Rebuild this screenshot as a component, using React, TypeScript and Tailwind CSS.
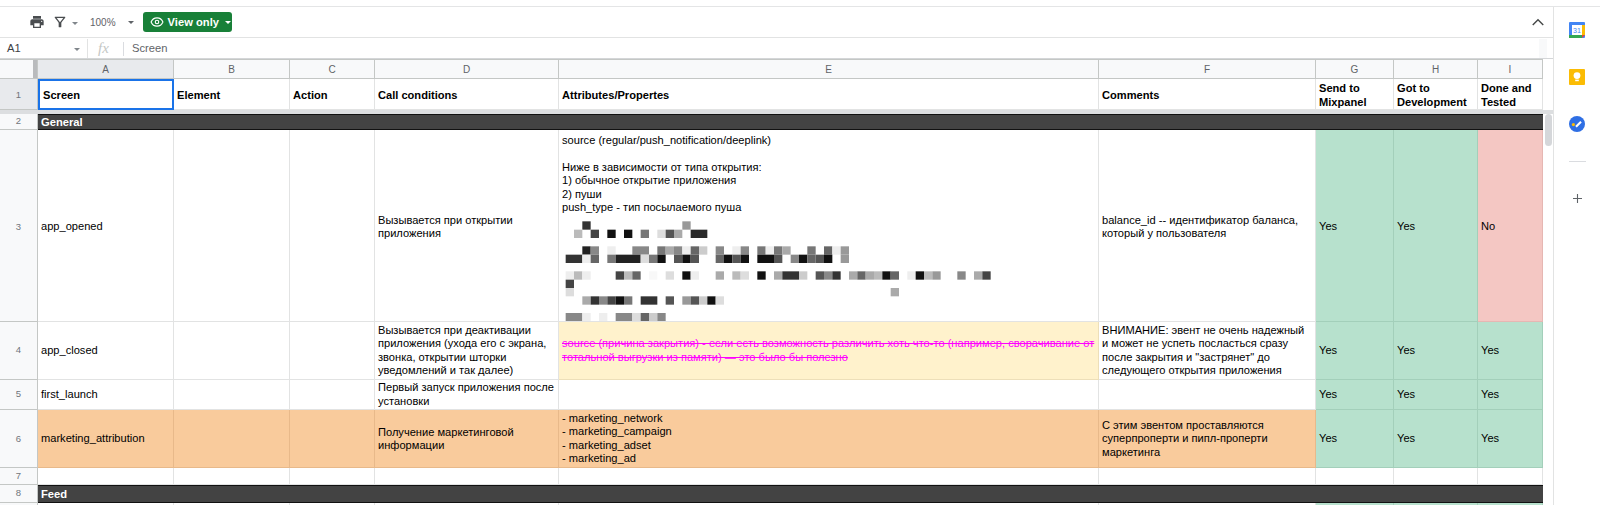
import { Eye } from 'lucide-react';

type Tone = 'plain' | 'orange' | 'yellow' | 'green' | 'red' | 'selected';

const toneClass: Record<Tone, string> = {
  plain: 'bg-white border-r border-b border-[#e2e3e3]',
  selected: 'bg-white border-2 border-[#1a73e8]',
  orange: 'bg-[#f9cb9c] border-r border-b border-[#e8b98a]',
  yellow: 'bg-[#fff2cc] border-r border-b border-[#eddfb9]',
  green: 'bg-[#b7e1cd] border-r border-b border-[#a3cfba]',
  red: 'bg-[#f4c7c3] border-r border-b border-[#e6b7b3]',
};

function Cell({ tone = 'plain', children, className = '' }: { tone?: Tone; children?: React.ReactNode; className?: string }) {
  return (
    <div className={`flex items-center overflow-hidden whitespace-pre px-[3px] leading-[13.4px] ${toneClass[tone]} ${className}`}>
      <div>{children}</div>
    </div>
  );
}

function RowNum({ n, active = false, className = '' }: { n?: number; active?: boolean; className?: string }) {
  return (
    <div className={`flex items-center justify-center border-r border-b border-[#c4c7c5] text-[9.5px] text-[#70757a] ${active ? 'bg-[#e8eaed]' : 'bg-[#f8f9fa]'} ${className}`}>
      {n}
    </div>
  );
}

function ColHead({ label, active = false }: { label: string; active?: boolean }) {
  return (
    <div className={`flex items-center justify-center border-t border-r border-b border-[#c4c7c5] text-[10px] text-[#5f6368] ${active ? 'bg-[#e8eaed]' : 'bg-[#f8f9fa]'}`}>
      {label}
    </div>
  );
}

function SectionRow({ n, title }: { n: number; title: string }) {
  return (
    <>
      <RowNum n={n} />
      <div className="col-span-9 flex items-center border-y border-[#111] bg-[#434343] pl-[3px] pt-[1px] text-[11.2px] font-bold leading-none text-white">{title}</div>
    </>
  );
}

function Caret({ className = '' }: { className?: string }) {
  return <span className={`inline-block h-0 w-0 border-x-[3px] border-t-[3px] border-x-transparent ${className}`} />;
}

// пикселизованный кусок ячейки: [строка, x, ширина, цвет] в координатах зума
const mosaic: [number, number, number, string][] = [
  [290, 100, 25, '#333'], [290, 400, 25, '#999'],
  [315, 75, 25, '#bbb'], [315, 125, 25, '#444'], [315, 175, 25, '#111'], [315, 225, 25, '#111'], [315, 275, 25, '#777'], [315, 325, 25, '#ddd'], [315, 350, 25, '#555'], [315, 375, 25, '#aaa'], [315, 425, 50, '#2a2a2a'],
  [365, 100, 25, '#222'], [365, 125, 25, '#888'], [365, 175, 25, '#eee'], [365, 250, 50, '#888'], [365, 325, 25, '#777'], [365, 350, 25, '#aaa'], [365, 375, 25, '#888'], [365, 400, 25, '#eee'], [365, 425, 25, '#666'], [365, 450, 25, '#ccc'], [365, 500, 25, '#888'], [365, 550, 25, '#eee'], [365, 575, 25, '#888'], [365, 625, 25, '#777'], [365, 650, 25, '#eee'], [365, 675, 25, '#777'], [365, 700, 25, '#aaa'], [365, 775, 25, '#777'], [365, 825, 25, '#666'], [365, 850, 25, '#eee'], [365, 875, 25, '#999'],
  [390, 50, 50, '#333'], [390, 100, 25, '#eee'], [390, 125, 25, '#666'], [390, 175, 25, '#777'], [390, 200, 75, '#222'], [390, 275, 25, '#ddd'], [390, 300, 25, '#777'], [390, 325, 25, '#111'], [390, 375, 25, '#555'], [390, 400, 25, '#111'], [390, 425, 25, '#555'], [390, 500, 25, '#666'], [390, 525, 25, '#111'], [390, 550, 25, '#555'], [390, 575, 25, '#111'], [390, 625, 50, '#111'], [390, 675, 25, '#555'], [390, 725, 25, '#888'], [390, 750, 25, '#111'], [390, 775, 25, '#666'], [390, 800, 25, '#555'], [390, 825, 25, '#111'], [390, 875, 25, '#999'],
  [440, 50, 25, '#eee'], [440, 75, 25, '#bbb'], [440, 100, 25, '#eee'], [440, 200, 25, '#444'], [440, 225, 25, '#bbb'], [440, 250, 25, '#666'], [440, 300, 25, '#f8f8f8'], [440, 350, 25, '#ddd'], [440, 400, 25, '#111'], [440, 425, 25, '#eee'], [440, 500, 25, '#aaa'], [440, 550, 25, '#bbb'], [440, 575, 25, '#ddd'], [440, 625, 25, '#111'], [440, 675, 25, '#aaa'], [440, 700, 50, '#333'], [440, 750, 25, '#ccc'], [440, 800, 25, '#555'], [440, 825, 25, '#888'], [440, 850, 25, '#333'], [440, 900, 25, '#aaa'], [440, 925, 25, '#666'], [440, 950, 25, '#aaa'], [440, 975, 25, '#bbb'], [440, 1000, 25, '#111'], [440, 1025, 25, '#666'], [440, 1075, 25, '#eee'], [440, 1100, 25, '#111'], [440, 1125, 25, '#bbb'], [440, 1150, 25, '#999'], [440, 1225, 25, '#888'], [440, 1275, 25, '#aaa'], [440, 1300, 25, '#444'],
  [465, 50, 25, '#444'], [490, 50, 25, '#ddd'], [490, 1025, 25, '#aaa'],
  [515, 100, 25, '#aaa'], [515, 125, 25, '#333'], [515, 150, 25, '#888'], [515, 175, 25, '#444'], [515, 200, 25, '#111'], [515, 225, 25, '#777'], [515, 275, 50, '#333'], [515, 350, 25, '#555'], [515, 400, 25, '#999'], [515, 425, 25, '#555'], [515, 450, 25, '#ccc'], [515, 475, 25, '#111'], [515, 500, 25, '#ddd'],
  [565, 50, 50, '#888'], [565, 100, 25, '#eee'], [565, 150, 25, '#eee'], [565, 200, 50, '#888'], [565, 250, 25, '#ddd'], [565, 275, 25, '#666'], [565, 300, 25, '#ccc'], [565, 325, 25, '#888'],
];

function Mosaic() {
  return (
    <svg width="460" height="105" viewBox="30 280 1380 315" className="mt-[4px] -ml-[3px] block">
      {mosaic.map(([y, x, w, c], i) => (
        <rect key={i} x={x} y={y} width={w} height={25} fill={c} />
      ))}
    </svg>
  );
}

export default function App() {
  return (
    <div className="flex h-[505px] w-[1600px] flex-col overflow-hidden bg-white font-['Liberation_Sans',Arial,sans-serif] text-[11.1px] text-black">
      <div className="h-[7px] shrink-0 border-b border-[#e4e5e6]" />
      <div className="flex min-h-0 flex-1">
        <div className="flex w-[1553px] flex-col">
          {/* панель инструментов */}
          <div className="flex h-[31px] shrink-0 items-center border-b border-[#e2e3e3] pl-[29px] text-[#444746]">
            <svg width="16" height="16" viewBox="0 0 24 24" fill="#4a4d50"><path d="M19 8H5c-1.66 0-3 1.34-3 3v6h4v4h12v-4h4v-6c0-1.66-1.34-3-3-3zm-3 11H8v-5h8v5zm3-7c-.55 0-1-.45-1-1s.45-1 1-1 1 .45 1 1-.45 1-1 1zm-1-9H6v4h12V3z" /></svg>
            <svg width="16" height="16" viewBox="0 0 24 24" fill="#4a4d50" className="ml-[7px]"><path d="M7 6h10l-5.01 6.3L7 6zm-2.75-.39C6.27 8.2 10 13 10 13v6c0 .55.45 1 1 1h2c.55 0 1-.45 1-1v-6s3.73-4.8 5.75-7.39C20.26 4.95 19.79 4 18.96 4H5.04c-.83 0-1.3.95-.79 1.61z" /></svg>
            <Caret className="ml-[4px] mt-[2px] border-t-[#80868b]" />
            <span className="ml-[12px] text-[10px] text-[#5f6368]">100%</span>
            <Caret className="ml-[12px] mt-[1px] border-x-[3.5px] border-t-[3.5px] border-t-[#5f6368]" />
            <div className="ml-[9px] flex h-[20px] w-[89px] items-center whitespace-nowrap rounded-[3px] bg-[#188038] pl-[7px] text-[11.2px] font-bold text-white">
              <Eye size={14} strokeWidth={2} />
              <span className="ml-[4px]">View only</span>
              <Caret className="ml-[6px] border-x-[3.5px] border-t-[3.5px] border-t-white" />
            </div>
            <svg width="14" height="14" viewBox="0 0 24 24" fill="none" stroke="#444746" strokeWidth="2.4" className="ml-auto mr-[8px]"><path d="M3 17l9-9 9 9" /></svg>
          </div>

          {/* строка формул */}
          <div className="flex h-[21px] shrink-0 items-center border-b border-[#d4d6d8] pt-[1px] text-[11.2px]">
            <span className="ml-[7px] w-[67px] text-[#3c4043]">A1</span>
            <Caret className="mt-[1px] border-t-[#80868b]" />
            <div className="ml-[7px] h-full w-px bg-[#e2e3e3]" />
            <span className="ml-[10px] w-[25px] font-['Liberation_Serif',serif] text-[15px] italic leading-none text-[#c4c7c5]">fx</span>
            <div className="h-[14px] w-px bg-[#dadce0]" />
            <span className="ml-[8px] text-[#5f6368]">Screen</span>
            <div className="ml-auto mr-[6px] h-full w-[8px] bg-[#f8f9fa]" />
          </div>

          <div className="flex min-h-0 flex-1">
            {/* таблица */}
            <div className="grid h-[446px] w-[1543px] grid-cols-[38px_136px_116px_85px_184px_540px_217px_78px_84px_65px] grid-rows-[20px_31px_4px_16px_192px_58px_30px_58px_17px_18px_20px]">
              <div className="flex justify-end border-t border-r border-b border-[#c4c7c5] bg-[#f8f9fa]">
                <div className="h-full w-[4px] bg-[#b9bbbd]" />
              </div>
              <ColHead label="A" active />
              <ColHead label="B" />
              <ColHead label="C" />
              <ColHead label="D" />
              <ColHead label="E" />
              <ColHead label="F" />
              <ColHead label="G" />
              <ColHead label="H" />
              <ColHead label="I" />

              <RowNum n={1} active className="pt-[3px]" />
              <Cell tone="selected" className="px-[2px] pt-[3px] font-bold">Screen</Cell>
              <Cell className="pt-[3px] font-bold">Element</Cell>
              <Cell className="pt-[3px] font-bold">Action</Cell>
              <Cell className="pt-[3px] font-bold">Call conditions</Cell>
              <Cell className="pt-[3px] font-bold">Attributes/Propertes</Cell>
              <Cell className="pt-[3px] font-bold">Comments</Cell>
              <Cell className="pt-[3px] font-bold">{'Send to\nMixpanel'}</Cell>
              <Cell className="pt-[3px] font-bold">{'Got to\nDevelopment'}</Cell>
              <Cell className="pt-[3px] font-bold">{'Done and\nTested'}</Cell>

              <div className="col-span-10 bg-[#dcdee0]" />

              <SectionRow n={2} title="General" />

              <RowNum n={3} className="pt-[3px]" />
              <Cell className="pt-[3px]">app_opened</Cell>
              <Cell />
              <Cell />
              <Cell className="pt-[3px]">{'Вызывается при открытии\nприложения'}</Cell>
              <div className="overflow-hidden whitespace-pre border-r border-b border-[#e2e3e3] px-[3px] pt-[4px] leading-[13.4px]">
                {'source (regular/push_notification/deeplink)\n\nНиже в зависимости от типа открытия:\n1) обычное открытие приложения\n2) пуши\npush_type - тип посылаемого пуша'}
                <Mosaic />
              </div>
              <Cell className="pt-[3px]">{'balance_id -- идентификатор баланса,\nкоторый у пользователя'}</Cell>
              <Cell tone="green" className="pt-[3px]">Yes</Cell>
              <Cell tone="green" className="pt-[3px]">Yes</Cell>
              <Cell tone="red" className="pt-[3px]">No</Cell>

              <RowNum n={4} />
              <Cell>app_closed</Cell>
              <Cell />
              <Cell />
              <Cell>{'Вызывается при деактивации\nприложения (ухода его с экрана,\nзвонка, открытии шторки\nуведомлений и так далее)'}</Cell>
              <Cell tone="yellow" className="text-[#ff00ff] line-through">{'source (причина закрытия) - если есть возможность различить хоть что-то (например, сворачивание от\nтотальной выгрузки из памяти) — это было бы полезно'}</Cell>
              <Cell>{'ВНИМАНИЕ: эвент не очень надежный\nи может не успеть посласться сразу\nпосле закрытия и "застрянет" до\nследующего открытия приложения'}</Cell>
              <Cell tone="green">Yes</Cell>
              <Cell tone="green">Yes</Cell>
              <Cell tone="green">Yes</Cell>

              <RowNum n={5} />
              <Cell>first_launch</Cell>
              <Cell />
              <Cell />
              <Cell>{'Первый запуск приложения после\nустановки'}</Cell>
              <Cell />
              <Cell />
              <Cell tone="green">Yes</Cell>
              <Cell tone="green">Yes</Cell>
              <Cell tone="green">Yes</Cell>

              <RowNum n={6} className="pt-[1px]" />
              <Cell tone="orange" className="pt-[1px]">marketing_attribution</Cell>
              <Cell tone="orange" />
              <Cell tone="orange" />
              <Cell tone="orange" className="pt-[1px]">{'Получение маркетинговой\nинформации'}</Cell>
              <Cell tone="orange">{'- marketing_network\n- marketing_campaign\n- marketing_adset\n- marketing_ad'}</Cell>
              <Cell tone="orange" className="pt-[1px]">{'С этим эвентом проставляются\nсуперпроперти и пипл-проперти\nмаркетинга'}</Cell>
              <Cell tone="green" className="pt-[1px]">Yes</Cell>
              <Cell tone="green" className="pt-[1px]">Yes</Cell>
              <Cell tone="green" className="pt-[1px]">Yes</Cell>

              <RowNum n={7} />
              <Cell />
              <Cell />
              <Cell />
              <Cell />
              <Cell />
              <Cell />
              <Cell />
              <Cell />
              <Cell />

              <SectionRow n={8} title="Feed" />

              <RowNum />
              <Cell />
              <Cell />
              <Cell />
              <Cell />
              <Cell />
              <Cell />
              <Cell tone="green" />
              <Cell tone="green" />
              <Cell tone="green" />
            </div>

            {/* полоса прокрутки */}
            <div className="flex w-[10px] flex-col">
              <div className="h-[51px] shrink-0" />
              <div className="h-[4px] shrink-0 bg-[#dcdee0]" />
              <div className="mx-auto h-[32px] w-[7px] rounded-full bg-[#d5d7da]" />
            </div>
          </div>
        </div>

        {/* боковая панель */}
        <div className="flex w-[47px] flex-col items-center border-l border-[#e2e3e3] pt-[15px]">
          <svg width="16" height="16" viewBox="0 0 16 16">
            <rect width="16" height="16" rx="1" fill="#4285f4" />
            <rect x="3" y="3" width="10" height="10" fill="#fff" />
            <rect x="13" y="3" width="3" height="10" fill="#fbbc04" />
            <rect y="13" width="13" height="3" fill="#34a853" />
            <path d="M13 13h3l-3 3z" fill="#ea4335" />
            <text x="8" y="11" textAnchor="middle" fontSize="7" fill="#4285f4">31</text>
          </svg>
          <svg width="16" height="16" viewBox="0 0 16 16" className="mt-[31px]">
            <rect width="16" height="16" rx="1" fill="#fbbc04" />
            <circle cx="8" cy="6.6" r="3.4" fill="#fff" />
            <rect x="6.2" y="10.6" width="3.6" height="1.6" fill="#fff" />
          </svg>
          <svg width="16" height="16" viewBox="0 0 16 16" className="mt-[31px]">
            <circle cx="8" cy="8" r="8" fill="#2f6fe4" />
            <circle cx="4.4" cy="8.6" r="1.6" fill="#fbbc04" />
            <path d="M7 10.8l5-5" stroke="#fff" strokeWidth="2.2" fill="none" />
          </svg>
          <div className="mt-[29px] h-px w-[17px] bg-[#dadce0]" />
          <svg width="11" height="11" viewBox="0 0 11 11" className="mt-[31px]">
            <path d="M5.5 1v9M1 5.5h9" stroke="#5f6368" strokeWidth="1.1" />
          </svg>
        </div>
      </div>
    </div>
  );
}
